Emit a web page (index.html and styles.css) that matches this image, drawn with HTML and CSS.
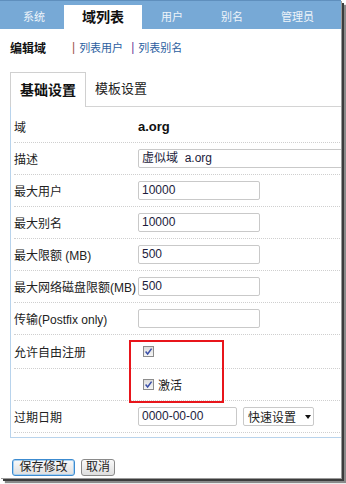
FILE: index.html
```html
<!DOCTYPE html>
<html>
<head>
<meta charset="utf-8">
<link rel="stylesheet" href="styles.css">
</head>
<body>
<div class="frame">
  <ul class="topnav">
    <li class="nav-item">系统</li>
    <li class="nav-item active">域列表</li>
    <li class="nav-item">用户</li>
    <li class="nav-item">别名</li>
    <li class="nav-item">管理员</li>
  </ul>
  <div class="subnav">
    <span class="subnav-title">编辑域</span>
    <span class="sep sep-a">|</span><a class="sublink">列表用户</a>
    <span class="sep sep-b">|</span><a class="sublink">列表别名</a>
  </div>
  <div class="tabs">
    <div class="tab active">基础设置</div>
    <div class="tab">模板设置</div>
  </div>
  <div class="panel">
    <div class="row"><span class="label">域</span><span class="value">a.org</span></div>
    <div class="row"><span class="label">描述</span><span class="field field-wide">虚似域&nbsp; a.org</span></div>
    <div class="row"><span class="label">最大用户</span><span class="field">10000</span></div>
    <div class="row"><span class="label">最大别名</span><span class="field">10000</span></div>
    <div class="row"><span class="label">最大限额 (MB)</span><span class="field">500</span></div>
    <div class="row"><span class="label">最大网络磁盘限额(MB)</span><span class="field">500</span></div>
    <div class="row"><span class="label">传输(Postfix only)</span><span class="field"></span></div>
    <div class="row row-tall"><span class="label">允许自由注册</span><span class="check-wrap"><span class="check"><svg viewBox="0 0 11 11" width="11" height="11"><path d="M2.6 5.6 L4.6 8 L8.6 2.6" fill="none" stroke="#3a4fa8" stroke-width="1.5"/></svg></span></span></div>
    <div class="row"><span class="label"></span><span class="check-wrap"><span class="check"><svg viewBox="0 0 11 11" width="11" height="11"><path d="M2.6 5.6 L4.6 8 L8.6 2.6" fill="none" stroke="#3a4fa8" stroke-width="1.5"/></svg></span><span class="check-text">激活</span></span></div>
    <div class="row"><span class="label">过期日期</span><span class="date-group"><span class="field field-date">0000-00-00</span><span class="select">快速设置<span class="arrow"></span></span></span></div>
  </div>
  <div class="actions">
    <span class="btn btn-primary">保存修改</span>
    <span class="btn">取消</span>
  </div>
  <div class="highlight"></div>
</div>
</body>
</html>
```
FILE: styles.css
```css
html, body {
  margin: 0;
  padding: 0;
  background: #ffffff;
}
body {
  width: 346px;
  height: 484px;
  overflow: hidden;
  font-family: "Liberation Sans", "Noto Sans CJK SC", sans-serif;
  font-size: 12px;
  color: #222;
}
.frame {
  position: relative;
  width: 341px;
  height: 478px;
  overflow: hidden;
  background: #fff;
  box-shadow: 1px 1px 0 #9a9a9a, 3px 3px 0 #3c3c3c, 5px 5px 1px #8a8a8a;
}
.topnav {
  list-style: none;
  margin: 0;
  padding: 3px 0 0 4px;
  height: 25px;
  display: flex;
  align-items: flex-end;
  background: #77a9d6;
  border-top: 1px solid #5f8fbd;
}
.nav-item {
  height: 24px;
  line-height: 24px;
  padding: 0 19px;
  color: #eef4fa;
  font-size: 11px;
}
.nav-item.active {
  background: #fff;
  color: #111;
  font-weight: bold;
  font-size: 14px;
  padding: 0 18px;
}
.subnav {
  display: flex;
  align-items: center;
  height: 36px;
  padding-left: 10px;
  font-size: 11px;
}
.subnav-title {
  font-weight: bold;
  font-size: 12px;
  color: #111;
  width: 62px;
}
.sep {
  margin-right: 4px;
  font-size: 12px;
}
.sep-a { color: #a0524a; }
.sep-b { color: #6a3d9a; margin-left: 8px; }
.sublink {
  color: #2c5ea0;
}
.tabs {
  display: flex;
  margin: 7px 0 0 10px;
  height: 34px;
  border-bottom: 1px solid #d4d4d4;
}
.tab {
  height: 34px;
  line-height: 34px;
  padding: 0 9px;
  font-size: 13px;
  color: #222;
}
.tab.active {
  border: 1px solid #d0d0d0;
  border-bottom: none;
  background: #fff;
  font-size: 14px;
  font-weight: bold;
  color: #111;
  height: 34px;
  margin-bottom: -1px;
}
.panel {
  margin-left: 10px;
  width: 400px;
  padding: 4px 0 4px 3px;
  border-left: 1px solid #b8d3ec;
  border-bottom: 1px solid #b8d3ec;
}
.row {
  display: flex;
  align-items: center;
  height: 31px;
  border-bottom: 1px dotted #cfcfcf;
}
.row-tall {
  height: 33px;
}
.label {
  width: 124px;
  flex: none;
  white-space: nowrap;
  color: #222;
}
.value {
  font-weight: bold;
  font-size: 13px;
  color: #111;
}
.field {
  box-sizing: border-box;
  width: 122px;
  height: 19px;
  line-height: 17px;
  padding-left: 3px;
  border: 1px solid #c9c9c9;
  border-radius: 2px;
  color: #1c1c3c;
  background: #fff;
}
.field-wide {
  width: 300px;
}
.date-group {
  display: flex;
  gap: 6px;
}
.field-date {
  width: 99px;
}
.select {
  box-sizing: border-box;
  display: flex;
  align-items: center;
  width: 71px;
  height: 19px;
  padding-left: 4px;
  border: 1px solid #c9c9c9;
  border-radius: 2px;
  color: #222;
}
.arrow {
  margin-left: 9px;
  width: 0;
  height: 0;
  border-left: 3px solid transparent;
  border-right: 3px solid transparent;
  border-top: 4px solid #111;
}
.check-wrap {
  display: flex;
  align-items: center;
  padding-left: 5px;
}
.check {
  box-sizing: border-box;
  width: 11px;
  height: 11px;
  border: 1px solid #8c8c8c;
  background: linear-gradient(#dcdcdc, #f6f6f6);
  display: flex;
}
.check svg {
  margin: -1px;
}
.check-text {
  margin-left: 4px;
  font-size: 12px;
}
.actions {
  display: flex;
  gap: 6px;
  padding: 21px 0 0 12px;
}
.btn {
  box-sizing: border-box;
  height: 17px;
  line-height: 15px;
  padding: 0 4px;
  border: 1px solid #8a8a8a;
  border-radius: 3px;
  background: linear-gradient(#fafafa, #dedede);
  color: #222;
}
.btn-primary {
  width: 63px;
  text-align: center;
  border-color: #3c8bd0;
  box-shadow: inset 0 0 0 1px #a8d0f0;
}
.highlight {
  position: absolute;
  left: 129px;
  top: 340px;
  width: 91px;
  height: 59px;
  border: 2px solid #e8151b;
}
```
